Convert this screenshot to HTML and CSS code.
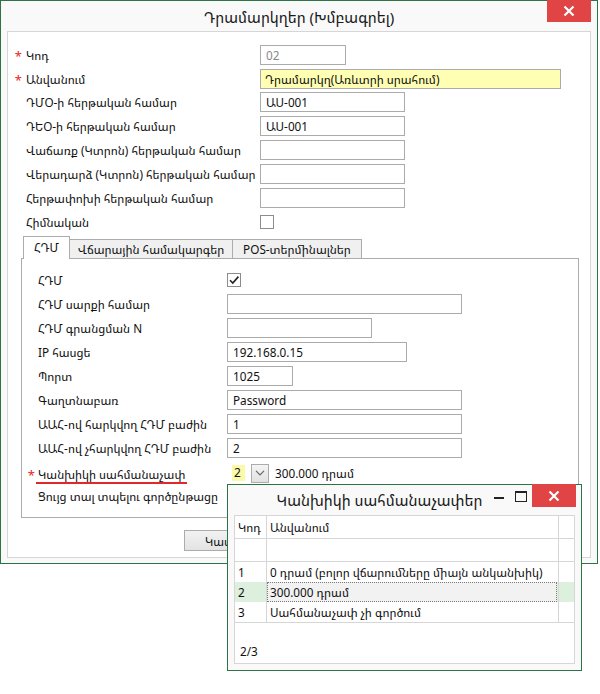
FILE: index.html
```html
<!DOCTYPE html>
<html lang="hy">
<head>
<meta charset="utf-8">
<title>Դրամարկղեր</title>
<link rel="stylesheet" href="styles.css">
</head>
<body>
<div class="window main-win">
  <div class="titlebar">
    <div class="title">Դրամարկղեր (Խմբագրել)</div>
    <div class="close-btn"><svg width="12" height="12" viewBox="0 0 12 12"><path d="M1.5 1.5 L10.5 10.5 M10.5 1.5 L1.5 10.5" stroke="#fff" stroke-width="2.2"/></svg></div>
  </div>
  <div class="panel">
    <div class="form top-form">
      <div class="row"><span class="req">*</span><span class="lbl">Կոդ</span><span class="field"><span class="inp w86 disabled">02</span></span></div>
      <div class="row"><span class="req">*</span><span class="lbl">Անվանում</span><span class="field"><span class="inp w301 yellow">Դրամարկղ(Առևտրի սրահում)</span></span></div>
      <div class="row"><span class="req"></span><span class="lbl">ԴՄՕ-ի հերթական համար</span><span class="field"><span class="inp w145">ԱՍ-001</span></span></div>
      <div class="row"><span class="req"></span><span class="lbl">ԴԵՕ-ի հերթական համար</span><span class="field"><span class="inp w145">ԱՍ-001</span></span></div>
      <div class="row"><span class="req"></span><span class="lbl">Վաճառք (Կտրոն) հերթական համար</span><span class="field"><span class="inp w145"></span></span></div>
      <div class="row"><span class="req"></span><span class="lbl">Վերադարձ (Կտրոն) հերթական համար</span><span class="field"><span class="inp w145"></span></span></div>
      <div class="row"><span class="req"></span><span class="lbl">Հերթափոխի հերթական համար</span><span class="field"><span class="inp w145"></span></span></div>
      <div class="row"><span class="req"></span><span class="lbl">Հիմնական</span><span class="field"><span class="chk"></span></span></div>
    </div>

    <div class="tabs">
      <div class="tab active">ՀԴՄ</div>
      <div class="tab t2">Վճարային համակարգեր</div>
      <div class="tab t3">POS-տերմինալներ</div>
    </div>
    <div class="tabpanel">
      <div class="form tab-form">
        <div class="row"><span class="req"></span><span class="lbl">ՀԴՄ</span><span class="field"><span class="chk checked"><svg width="12" height="12" viewBox="0 0 12 12"><path d="M2 6.2 L4.8 9 L10.4 2.6" fill="none" stroke="#222" stroke-width="1.6"/></svg></span></span></div>
        <div class="row"><span class="req"></span><span class="lbl">ՀԴՄ սարքի համար</span><span class="field"><span class="inp w235"></span></span></div>
        <div class="row"><span class="req"></span><span class="lbl">ՀԴՄ գրանցման N</span><span class="field"><span class="inp w145"></span></span></div>
        <div class="row"><span class="req"></span><span class="lbl">IP հասցե</span><span class="field"><span class="inp w180">192.168.0.15</span></span></div>
        <div class="row"><span class="req"></span><span class="lbl">Պորտ</span><span class="field"><span class="inp w66">1025</span></span></div>
        <div class="row"><span class="req"></span><span class="lbl">Գաղտնաբառ</span><span class="field"><span class="inp w235">Password</span></span></div>
        <div class="row"><span class="req"></span><span class="lbl">ԱԱՀ-ով հարկվող ՀԴՄ բաժին</span><span class="field"><span class="inp w235">1</span></span></div>
        <div class="row"><span class="req"></span><span class="lbl">ԱԱՀ-ով չհարկվող ՀԴՄ բաժին</span><span class="field"><span class="inp w235">2</span></span></div>
        <div class="row"><span class="req">*</span><span class="lbl underlined">Կանխիկի սահմանաչափ</span><span class="field combo"><span class="combo-val">2</span><span class="combo-btn"><svg width="10" height="6" viewBox="0 0 10 6"><path d="M1 0.8 L5 4.8 L9 0.8" fill="none" stroke="#666" stroke-width="1.2"/></svg></span><span class="combo-text">300.000 դրամ</span></span></div>
        <div class="row"><span class="req"></span><span class="lbl">Ցույց տալ տպելու գործընթացը</span><span class="field"></span></div>
      </div>
    </div>

    <div class="buttons">
      <div class="btn">Կատարել</div>
    </div>
  </div>
</div>

<div class="window popup">
  <div class="ptitlebar">
    <div class="ptitle">Կանխիկի սահմանաչափեր</div>
    <div class="wctl">
      <span class="minline"></span>
      <span class="maxbox"></span>
      <span class="pclose"><svg width="12" height="12" viewBox="0 0 12 12"><path d="M1.5 1.5 L10.5 10.5 M10.5 1.5 L1.5 10.5" stroke="#fff" stroke-width="2.2"/></svg></span>
    </div>
  </div>
  <div class="grid">
    <div class="grow ghead"><span class="c1">Կոդ</span><span class="c2">Անվանում</span><span class="c3"></span></div>
    <div class="grow gfilter"><span class="c1"></span><span class="c2"></span><span class="c3"></span></div>
    <div class="gbody">
      <div class="grow gdata"><span class="c1">1</span><span class="c2">0 դրամ (բոլոր վճարումները միայն անկանխիկ)</span><span class="c3"></span></div>
      <div class="grow gdata sel"><span class="c1">2</span><span class="c2"><span class="focus">300.000 դրամ</span></span><span class="c3"></span></div>
      <div class="grow gdata"><span class="c1">3</span><span class="c2">Սահմանաչափ չի գործում</span><span class="c3"></span></div>
    </div>
    <div class="gfoot">2/3</div>
  </div>
</div>
</body>
</html>
```

FILE: styles.css
```css
* { box-sizing: border-box; }
body {
  margin: 0;
  font-family: "Noto Sans Armenian", "Noto Sans", "DejaVu Sans", sans-serif;
  font-size: 11.75px;
  color: #111;
  background: #ffffff;
}

.window {
  border: 1px solid #2c7445;
  background: #f9f9f9;
}

.main-win {
  width: 598px;
  height: 564px;
}

.titlebar {
  position: relative;
  height: 30px;
  display: flex;
  align-items: center;
  justify-content: center;
}
.title {
  font-size: 15px;
  color: #1a1a1a;
  padding-top: 1px;
}
.close-btn {
  position: absolute;
  top: -1px;
  right: 6px;
  width: 44px;
  height: 22px;
  background: #e04444;
  display: flex;
  align-items: center;
  justify-content: center;
}

.panel {
  margin: 0 6px;
  height: 527px;
  border: 1px solid #d6d6d6;
  background: #ffffff;
  padding-top: 12px;
}

.form .row {
  display: grid;
  height: 20px;
  margin-bottom: 4px;
  align-items: center;
}
.top-form .row { grid-template-columns: 18px 234px 1fr; }
.tab-form .row { grid-template-columns: 16px 189px 1fr; }

.req {
  color: #e8262a;
  font-size: 13px;
  text-align: right;
  padding-right: 4px;
  padding-top: 3px;
}
.tab-form .req { padding-right: 3px; }
.lbl {
  white-space: nowrap;
  color: #111;
}
.lbl.underlined {
  border-bottom: 2px solid #e3262c;
  justify-self: start;
  margin-left: -2px;
  padding-left: 2px;
  padding-right: 2px;
  line-height: 16px;
  margin-top: 4px;
}
.field {
  display: flex;
  align-items: center;
}
.inp {
  display: block;
  height: 20px;
  border: 1px solid #ababab;
  background: #fff;
  padding: 0 5px;
  line-height: 18px;
  white-space: nowrap;
  overflow: hidden;
  color: #111;
}
.inp.disabled { color: #8a8a8a; }
.inp.yellow { background: #ffffb4; padding-left: 4px; }
.w66 { width: 66px; }
.w86 { width: 86px; }
.w145 { width: 145px; }
.w180 { width: 180px; }
.w235 { width: 235px; }
.w301 { width: 301px; }

.chk {
  width: 14px;
  height: 14px;
  border: 1px solid #8c8c8c;
  background: #fff;
  display: flex;
  align-items: center;
  justify-content: center;
}

.tabs {
  position: relative;
  z-index: 1;
  display: flex;
  align-items: flex-end;
  height: 23px;
  margin-left: 15px;
  margin-top: 2px;
}
.tab {
  height: 20px;
  border: 1px solid #acacac;
  background: #f0f0f0;
  display: flex;
  align-items: center;
  justify-content: center;
  white-space: nowrap;
  color: #111;
}
.tab.active {
  width: 47px;
  height: 23px;
  background: #fff;
  border-bottom: none;
  padding-bottom: 2px;
}
.tab.t2 { width: 164px; margin-left: -1px; }
.tab.t3 { width: 130px; margin-left: -1px; }

.tabpanel {
  margin-left: 13px;
  width: 558px;
  height: 260px;
  margin-top: -1px;
  border: 1px solid #acacac;
  background: #fff;
  padding-top: 11px;
}

.combo-val {
  margin-left: 5px;
  width: 13px;
  height: 16px;
  background: #fafaa8;
  line-height: 16px;
  padding-left: 2px;
  font-size: 12px;
}
.combo-btn {
  margin-left: 6px;
  width: 18px;
  height: 19px;
  border: 1px solid #acacac;
  background: linear-gradient(#f4f4f4, #e2e2e2);
  display: flex;
  align-items: center;
  justify-content: center;
}
.combo-text {
  margin-left: 6px;
  white-space: nowrap;
}

.buttons {
  display: flex;
  padding-left: 176px;
  margin-top: 12px;
}
.btn {
  width: 100px;
  height: 21px;
  border: 1px solid #acacac;
  background: linear-gradient(#f2f2f2, #e3e3e3);
  display: flex;
  align-items: center;
  justify-content: center;
  color: #111;
}

/* popup */
.popup {
  position: absolute;
  left: 227px;
  top: 484px;
  width: 355px;
  height: 187px;
  background: #f9f9f9;
}
.ptitlebar {
  position: relative;
  height: 30px;
  display: flex;
  align-items: center;
  justify-content: center;
}
.ptitle {
  font-size: 15px;
  color: #1a1a1a;
  margin-right: 50px;
}
.wctl {
  position: absolute;
  top: -1px;
  right: 5px;
  display: flex;
  align-items: flex-start;
}
.minline {
  width: 10px;
  height: 2px;
  background: #222;
  margin-top: 13px;
  margin-right: 11px;
}
.maxbox {
  width: 12px;
  height: 11px;
  border: 1px solid #222;
  border-top-width: 2px;
  margin-top: 7px;
  margin-right: 5px;
}
.pclose {
  width: 44px;
  height: 23px;
  background: #e04444;
  display: flex;
  align-items: center;
  justify-content: center;
}

.grid {
  margin: 0 6px;
  height: 149px;
  border: 1px solid #d6d6d6;
  background: #fff;
  display: flex;
  flex-direction: column;
}
.grow {
  display: grid;
  grid-template-columns: 32px 292px 1fr;
}
.grow > span {
  border-right: 1px solid #d6d6d6;
  white-space: nowrap;
  overflow: hidden;
}
.grow > span.c3 { border-right: none; }
.ghead { height: 23px; border-bottom: 1px solid #d6d6d6; }
.ghead > span { line-height: 22px; }
.c1 { padding-left: 3px; }
.c2 { padding-left: 3px; }
.gfilter { height: 23px; border-bottom: 1px solid #d6d6d6; }
.gbody { border-bottom: 1px solid #d6d6d6; }
.gdata { height: 20px; }
.gdata > span { line-height: 20px; }
.gdata.sel { background: #ddefdd; }
.gdata.sel .c2 { padding: 0; }
.focus {
  display: block;
  height: 20px;
  background: #f2f2f2;
  border: 1px dotted #7a7a7a;
  padding-left: 2px;
  line-height: 18px;
  margin-right: 1px;
}
.gfoot {
  flex: 1;
  display: flex;
  align-items: flex-end;
  padding: 0 0 4px 5px;
}
```
